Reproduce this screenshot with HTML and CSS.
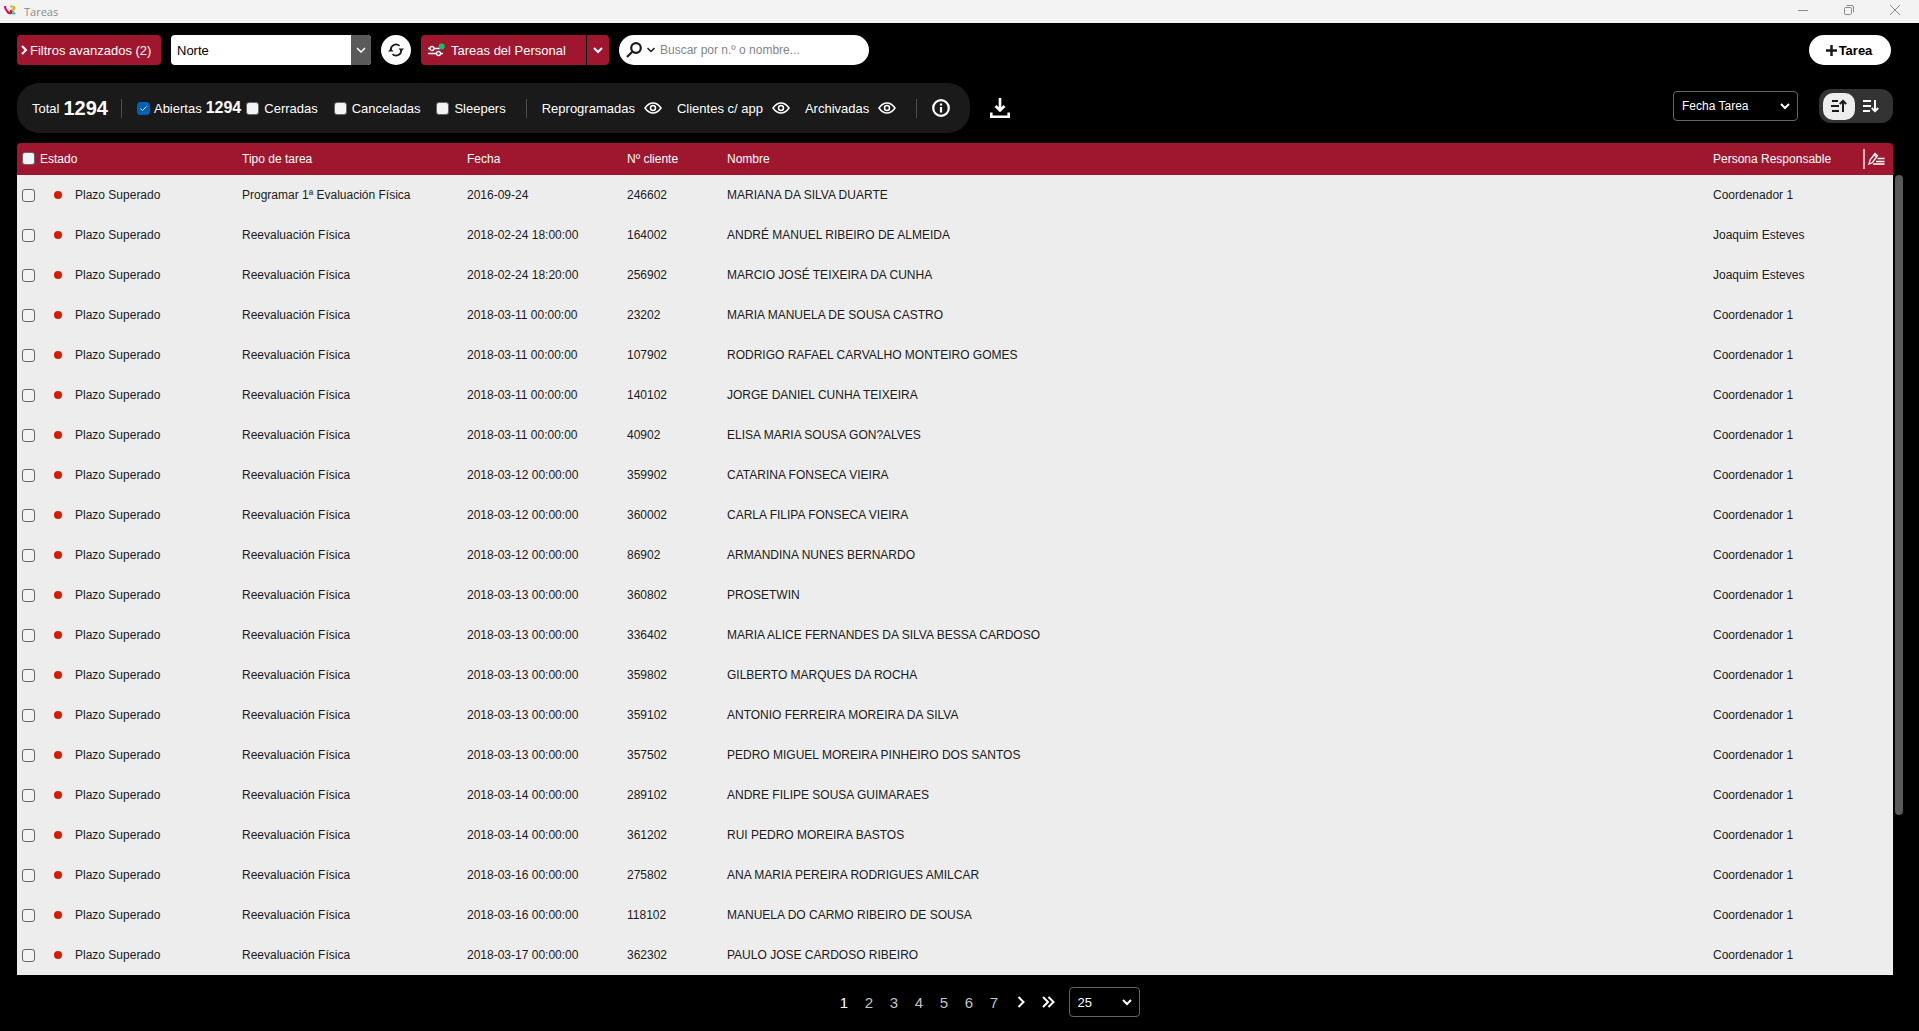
FILE: index.html
```html
<!DOCTYPE html>
<html lang="es">
<head>
    <meta charset="UTF-8">
    <meta name="viewport" content="width=device-width, initial-scale=1.0">
    <title>Tareas</title>
    <link rel="stylesheet" href="styles.css">
</head>
<body>
    <header class="titlebar">
        <svg class="logo" width="12" height="10" viewBox="0 0 12 10" fill="none" stroke-width="2">
            <path d="M1 1q0 4 3.500 6" stroke="#e5007d"/>
            <path d="M3 6.500q2 2.500 4 1.500V5" stroke="#d3122a"/>
            <path d="M6 1.500h3" stroke="#a4c94a"/>
            <path d="M10 1v3L7.500 5" stroke="#f6a623"/>
            <path d="M9 5.500v3h2.500" stroke="#4fc1b0"/>
        </svg>
        <span class="title">Tareas</span>
        <button class="win-btn" aria-label="Minimizar"><svg width="12" height="12" viewBox="0 0 12 12"><path d="M1 6.500h10"/></svg></button>
        <button class="win-btn" aria-label="Restaurar"><svg width="12" height="12" viewBox="0 0 12 12"><rect x="1.500" y="3.500" width="7" height="7" rx="1"/><path d="M3.500 1.500H9q1.500 0 1.500 1.500v5.500"/></svg></button>
        <button class="win-btn" aria-label="Cerrar"><svg width="12" height="12" viewBox="0 0 12 12"><path d="M1 1l10 10M11 1L1 11"/></svg></button>
    </header>

    <div class="toolbar">
        <button class="btn filters">
            <svg width="6" height="10" viewBox="0 0 6 10" fill="none" stroke="#fff" stroke-width="2"><path d="M1 1l4 4-4 4"/></svg>
            Filtros avanzados (2)
        </button>
        <div class="select-box zone">
            <select aria-label="Zona"><option>Norte</option></select>
            <span class="zone-arrow"><svg width="10" height="6" viewBox="0 0 10 6" fill="none" stroke="#fff" stroke-width="1.500"><path d="M1 1l4 4 4-4"/></svg></span>
        </div>
        <button class="refresh" aria-label="Actualizar">
            <svg width="16" height="14" viewBox="0 0 16 14" fill="none" stroke="#1a1a1a" stroke-width="1.800">
                <path d="M2.800 7.500V7A5.200 5.200 0 0 1 11.500 2.800M13.200 6.500v.5A5.200 5.200 0 0 1 4.500 11.200"/>
                <path d="M0 8.500L2.800 5.500 5.600 8.500zM16 5.500L13.200 8.500 10.400 5.500z" fill="#1a1a1a" stroke="none"/>
            </svg>
        </button>
        <div class="split">
            <button class="btn staff">
                <svg width="17" height="14" viewBox="0 0 17 14" fill="none" stroke="#fff" stroke-width="1.300">
                    <path d="M0 5.500h2M6 5.500h6M0 10.500h8M13 10.500h2"/>
                    <circle cx="4" cy="5.500" r="2"/><circle cx="10.500" cy="10.500" r="2"/>
                    <circle cx="13.700" cy="3.500" r="3" fill="#00c86e" stroke="none"/>
                </svg>
                Tareas del Personal
            </button>
            <button class="btn staff-more" aria-label="Más vistas"><svg width="10" height="7" viewBox="0 0 10 7" fill="none" stroke="#fff" stroke-width="2"><path d="M1 1l4 4 4-4"/></svg></button>
        </div>
        <div class="search">
            <svg width="16" height="16" viewBox="0 0 16 16" fill="none" stroke="#1a1a1a" stroke-width="2.200"><circle cx="10" cy="6" r="4.800"/><path d="M6.500 9.500L1 15"/></svg>
            <svg width="8" height="6" viewBox="0 0 8 6" fill="none" stroke="#1a1a1a" stroke-width="1.500"><path d="M.5 1L4 4.500 7.500 1"/></svg>
            <input type="text" placeholder="Buscar por n.º o nombre..." aria-label="Buscar">
        </div>
        <button class="new-task">
            <svg width="11" height="11" viewBox="0 0 11 11" stroke="#1a1a1a" stroke-width="2.500"><path d="M5.500 0v11M0 5.500h11"/></svg>
            Tarea
        </button>
    </div>

    <div class="status-row">
        <div class="status-bar">
            <span class="total">Total <b>1294</b></span>
            <span class="divider first"></span>
            <div class="checks">
                <label class="check open"><input type="checkbox" checked> Abiertas <b>1294</b></label>
                <label class="check"><input type="checkbox"> Cerradas</label>
                <label class="check"><input type="checkbox"> Canceladas</label>
                <label class="check"><input type="checkbox"> Sleepers</label>
            </div>
            <span class="divider"></span>
            <div class="views">
                <button class="view">Reprogramadas <svg class="eye" width="18" height="12" viewBox="0 0 18 12"><path d="M1 6q3.500-5 8-5t8 5q-3.500 5-8 5T1 6z"/><circle cx="9" cy="6" r="2.500"/></svg></button>
                <button class="view">Clientes c/ app <svg class="eye" width="18" height="12" viewBox="0 0 18 12"><path d="M1 6q3.500-5 8-5t8 5q-3.500 5-8 5T1 6z"/><circle cx="9" cy="6" r="2.500"/></svg></button>
                <button class="view">Archivadas <svg class="eye" width="18" height="12" viewBox="0 0 18 12"><path d="M1 6q3.500-5 8-5t8 5q-3.500 5-8 5T1 6z"/><circle cx="9" cy="6" r="2.500"/></svg></button>
            </div>
            <span class="divider"></span>
            <button class="icon-btn" aria-label="Información"><svg width="18" height="18" viewBox="0 0 18 18" fill="none" stroke="#fff" stroke-width="2.200"><circle cx="9" cy="9" r="7.800"/><path d="M9 4.500v2M9 8v5.500"/></svg></button>
        </div>
        <button class="icon-btn" aria-label="Descargar"><svg width="20" height="20" viewBox="0 0 20 20" fill="none" stroke="#fff" stroke-width="2.600"><path d="M10 0v12M5.500 8L10 12.500 14.500 8M1.300 14.500v4.200h17.400v-4.200"/></svg></button>
        <div class="ordering">
            <div class="select-box order">
                <select aria-label="Ordenar por"><option>Fecha Tarea</option></select>
                <svg class="arrow" width="10" height="7" viewBox="0 0 10 7"><path d="M1 1l4 4 4-4"/></svg>
            </div>
            <div class="sort">
                <button class="sort-btn active" aria-label="Ascendente"><svg width="16" height="14" viewBox="0 0 16 14"><path d="M1 2h6M0 7h8M1 12h7M12 13V2M8.800 5L12 1.800 15.200 5"/></svg></button>
                <button class="sort-btn" aria-label="Descendente"><svg width="16" height="14" viewBox="0 0 16 14"><path d="M0 2h8M0 7h8M0 12h7M12 1v11M8.800 9L12 12.200 15.200 9"/></svg></button>
            </div>
        </div>
    </div>

    <main class="list">
        <table class="tasks">
            <colgroup>
                <col class="col-state">
                <col class="col-type">
                <col class="col-date">
                <col class="col-client">
                <col>
                <col class="col-owner">
                <col class="col-edit">
            </colgroup>
            <thead>
                <tr>
                    <th><label class="check-all"><input type="checkbox"> Estado</label></th>
                    <th>Tipo de tarea</th>
                    <th>Fecha</th>
                    <th>Nº cliente</th>
                    <th>Nombre</th>
                    <th>Persona Responsable</th>
                    <th>
                        <button class="edit" aria-label="Editar columnas">
                            <svg width="17" height="13" viewBox="0 0 17 13" fill="none" stroke="#fff"><path d="M1 12l1-4 5-6.500 2.500 2L4.500 10.500zM6 3l2.500 2M9.500 6.500h7M8 9.500h8.500M5 12h11.500" stroke-width="1.300"/></svg>
                        </button>
                    </th>
                </tr>
            </thead>
            <tbody id="taskRows"></tbody>
        </table>
        <div class="scrollbar"><div class="thumb"></div></div>
    </main>

    <nav class="pager">
        <a href="#" class="page current">1</a>
        <a href="#" class="page">2</a>
        <a href="#" class="page">3</a>
        <a href="#" class="page">4</a>
        <a href="#" class="page">5</a>
        <a href="#" class="page">6</a>
        <a href="#" class="page">7</a>
        <a href="#" class="page next" aria-label="Siguiente"><svg width="8" height="12" viewBox="0 0 8 12"><path d="M1.500 1l5 5-5 5"/></svg></a>
        <a href="#" class="page last" aria-label="Última"><svg width="13" height="12" viewBox="0 0 13 12"><path d="M1 1l5 5-5 5M6.500 1l5 5-5 5"/></svg></a>
        <div class="select-box size">
            <select aria-label="Tareas por página"><option>25</option></select>
            <svg class="arrow" width="10" height="7" viewBox="0 0 10 7"><path d="M1 1l4 4 4-4"/></svg>
        </div>
    </nav>

    <script>
        const REEV = 'Reevaluación Física';
        const COORD = 'Coordenador 1';

        const tasks = [
            ['Programar 1ª Evaluación Física', '2016-09-24', '246602', 'MARIANA DA SILVA DUARTE', COORD],
            [REEV, '2018-02-24 18:00:00', '164002', 'ANDRÉ MANUEL RIBEIRO DE ALMEIDA', 'Joaquim Esteves'],
            [REEV, '2018-02-24 18:20:00', '256902', 'MARCIO JOSÉ TEIXEIRA DA CUNHA', 'Joaquim Esteves'],
            [REEV, '2018-03-11 00:00:00', '23202', 'MARIA MANUELA DE SOUSA CASTRO', COORD],
            [REEV, '2018-03-11 00:00:00', '107902', 'RODRIGO RAFAEL CARVALHO MONTEIRO GOMES', COORD],
            [REEV, '2018-03-11 00:00:00', '140102', 'JORGE DANIEL CUNHA TEIXEIRA', COORD],
            [REEV, '2018-03-11 00:00:00', '40902', 'ELISA MARIA SOUSA GON?ALVES', COORD],
            [REEV, '2018-03-12 00:00:00', '359902', 'CATARINA FONSECA VIEIRA', COORD],
            [REEV, '2018-03-12 00:00:00', '360002', 'CARLA FILIPA FONSECA VIEIRA', COORD],
            [REEV, '2018-03-12 00:00:00', '86902', 'ARMANDINA NUNES BERNARDO', COORD],
            [REEV, '2018-03-13 00:00:00', '360802', 'PROSETWIN', COORD],
            [REEV, '2018-03-13 00:00:00', '336402', 'MARIA ALICE FERNANDES DA SILVA BESSA CARDOSO', COORD],
            [REEV, '2018-03-13 00:00:00', '359802', 'GILBERTO MARQUES DA ROCHA', COORD],
            [REEV, '2018-03-13 00:00:00', '359102', 'ANTONIO FERREIRA MOREIRA DA SILVA', COORD],
            [REEV, '2018-03-13 00:00:00', '357502', 'PEDRO MIGUEL MOREIRA PINHEIRO DOS SANTOS', COORD],
            [REEV, '2018-03-14 00:00:00', '289102', 'ANDRE FILIPE SOUSA GUIMARAES', COORD],
            [REEV, '2018-03-14 00:00:00', '361202', 'RUI PEDRO MOREIRA BASTOS', COORD],
            [REEV, '2018-03-16 00:00:00', '275802', 'ANA MARIA PEREIRA RODRIGUES AMILCAR', COORD],
            [REEV, '2018-03-16 00:00:00', '118102', 'MANUELA DO CARMO RIBEIRO DE SOUSA', COORD],
            [REEV, '2018-03-17 00:00:00', '362302', 'PAULO JOSE CARDOSO RIBEIRO', COORD]
        ];

        document.getElementById('taskRows').innerHTML = tasks.map(([type, date, client, name, owner]) => `
            <tr>
                <td><label class="state"><input type="checkbox"><span class="dot"></span>Plazo Superado</label></td>
                <td>${type}</td>
                <td>${date}</td>
                <td>${client}</td>
                <td>${name}</td>
                <td colspan="2">${owner}</td>
            </tr>`).join('');
    </script>
</body>
</html>
```
FILE: styles.css
```css
* {
    box-sizing: border-box;
}
body {
    margin: 0;
    background-color: #000;
    color: #fff;
    font-family: "Liberation Sans", Arial, sans-serif;
    font-size: 13px;
}
button, select, input {
    font: inherit;
    color: inherit;
}
button {
    border: none;
    background: none;
    padding: 0;
    display: flex;
    align-items: center;
    cursor: pointer;
}
svg {
    flex: none;
}
input[type="checkbox"] {
    appearance: none;
    flex: none;
    width: 13px;
    height: 13px;
    margin: 0;
    border: 1px solid #666;
    border-radius: 3px;
    background-color: #f3f3f3;
}
input[type="checkbox"]:checked {
    border-color: #005fb8;
    background: #005fb8 url("data:image/svg+xml,%3Csvg xmlns='http://www.w3.org/2000/svg' viewBox='0 0 11 11' fill='none' stroke='white'%3E%3Cpath d='M2.500 5.500l2 2 4-4'/%3E%3C/svg%3E");
}

/* window title */
.titlebar {
    display: flex;
    align-items: center;
    height: 23px;
    padding: 0 18px 3px 4px;
    background-color: #f3f3f3;
    color: #8a8a8a;
    font-family: "Open Sans", sans-serif;
    font-size: 11px;
}
.title {
    flex: 1;
    margin-left: 8px;
    padding-top: 3px;
}
.win-btn {
    margin-left: 34px;
}
.win-btn svg {
    fill: none;
    stroke: #8a8a8a;
}

/* toolbar */
.toolbar {
    display: flex;
    align-items: center;
    gap: 10px;
    padding: 12px 28px 18px 17px;
}
.btn {
    height: 30px;
    background-color: #9e172f;
    border-radius: 4px;
}
.filters {
    gap: 3px;
    width: 144px;
    padding-left: 4px;
}
.select-box {
    position: relative;
    display: flex;
    align-items: center;
    height: 30px;
}
.select-box select {
    appearance: none;
    width: 100%;
    height: 100%;
    margin: 0;
    padding: 0 8px;
    border: 1px solid #666;
    border-radius: 4px;
    background-color: #000;
}
.arrow {
    position: absolute;
    right: 8px;
    fill: none;
    stroke: #fff;
    stroke-width: 2;
    pointer-events: none;
}
.zone {
    width: 200px;
}
.zone select {
    padding: 0 6px;
    border: none;
    background-color: #fff;
    color: #000;
}
.zone-arrow {
    position: absolute;
    right: 0;
    display: flex;
    align-items: center;
    justify-content: center;
    width: 20px;
    height: 100%;
    border-radius: 0 4px 4px 0;
    background-color: #5a5a5a;
    pointer-events: none;
}
.refresh {
    justify-content: center;
    width: 30px;
    height: 30px;
    border-radius: 50%;
    background-color: #fff;
}
.split {
    display: flex;
    gap: 1px;
}
.staff {
    gap: 6px;
    width: 165px;
    padding-left: 7px;
    border-radius: 4px 0 0 4px;
}
.staff-more {
    justify-content: center;
    width: 22px;
    border-radius: 0 4px 4px 0;
}
.search {
    display: flex;
    align-items: center;
    gap: 5px;
    width: 250px;
    height: 30px;
    padding: 0 16px 0 7px;
    border-radius: 15px;
    background-color: #fff;
}
.search input {
    flex: 1;
    min-width: 0;
    padding: 0;
    border: none;
    outline: none;
    background: none;
    color: #000;
    font-size: 12px;
}
.search input::placeholder {
    color: #858585;
}
.new-task {
    justify-content: center;
    gap: 2px;
    width: 82px;
    height: 30px;
    margin-left: auto;
    padding-right: 2px;
    border-radius: 15px;
    background-color: #fff;
    color: #000;
    font-weight: bold;
}

/* counters and sort order */
.status-row {
    display: flex;
    align-items: center;
    padding: 0 26px 10px 17px;
}
.status-bar {
    display: flex;
    align-items: center;
    height: 50px;
    margin-right: 20px;
    padding: 0 20px 0 15px;
    border-radius: 22px;
    background-color: #1a1a1a;
}
.total {
    display: flex;
    align-items: center;
    gap: 4px;
}
.total b {
    font-size: 20px;
}
.divider {
    width: 1px;
    height: 19px;
    margin: 0 15px 0 20px;
    background-color: #4d4d4d;
}
.divider.first {
    margin-left: 13px;
}
.checks {
    display: flex;
    gap: 16px;
}
.views {
    display: flex;
    gap: 15px;
}
.check {
    display: flex;
    align-items: center;
    gap: 5px;
}
.check b {
    font-size: 16px;
}
.open {
    gap: 4px;
    margin-right: -11px;
}
.view {
    gap: 9px;
}
.eye {
    fill: none;
    stroke: #fff;
    stroke-width: 1.5;
}
.ordering {
    display: flex;
    align-items: center;
    gap: 21px;
    margin-left: auto;
    padding-bottom: 4px;
}
.order {
    width: 125px;
    font-size: 12px;
}
.sort {
    display: flex;
    align-items: center;
    width: 74px;
    height: 34px;
    padding: 0 4px;
    border-radius: 12px;
    background-color: #333;
}
.sort-btn {
    justify-content: center;
    width: 32px;
    height: 27px;
    border-radius: 10px;
}
.sort-btn svg {
    fill: none;
    stroke: #fff;
    stroke-width: 2;
}
.sort-btn.active {
    background-color: #ededed;
}
.sort-btn.active svg {
    stroke: #1a1a1a;
}

/* task list */
.list {
    display: flex;
    gap: 2px;
    padding: 0 16px 0 17px;
    font-size: 12px;
}
.tasks {
    flex: 1;
    table-layout: fixed;
    border-collapse: separate;
    border-spacing: 0;
    color: #1a1a1a;
}
.col-state, .col-type {
    width: 225px;
}
.col-date {
    width: 160px;
}
.col-client {
    width: 100px;
}
.col-owner {
    width: 150px;
}
.col-edit {
    width: 30px;
}
.tasks th {
    height: 32px;
    padding: 0 0 1px;
    background-color: #9e172f;
    color: #fff;
    font-weight: normal;
    text-align: left;
}
.tasks th:first-child {
    border-top-left-radius: 4px;
}
.tasks th:last-child {
    border-top-right-radius: 4px;
}
.tasks td {
    height: 40px;
    padding: 0;
    background-color: #ededed;
}
.check-all, .state {
    display: flex;
    align-items: center;
    gap: 5px;
    padding-left: 5px;
}
.state {
    gap: 0;
}
.dot {
    width: 8px;
    height: 8px;
    margin: 0 13px 0 19px;
    border-radius: 50%;
    background-color: #d91a00;
}
.edit {
    height: 20px;
    padding-left: 3px;
    border-left: 2px solid #e0b3bb;
}
.scrollbar {
    width: 8px;
    padding-top: 32px;
}
.thumb {
    height: 80%;
    border-radius: 4px;
    background-color: #5a5a5a;
}

/* pagination */
.pager {
    display: flex;
    align-items: center;
    justify-content: center;
    padding: 12px 0 12px 52px;
}
.page {
    display: flex;
    justify-content: center;
    width: 25px;
    color: #c4c4c4;
    font-size: 15px;
    text-decoration: none;
}
.page svg {
    fill: none;
    stroke: #fff;
    stroke-width: 2;
}
.page.current {
    color: #fff;
}
.page.next {
    width: 29px;
}
.page.last {
    margin-right: 8px;
}
.size {
    width: 71px;
}
```
